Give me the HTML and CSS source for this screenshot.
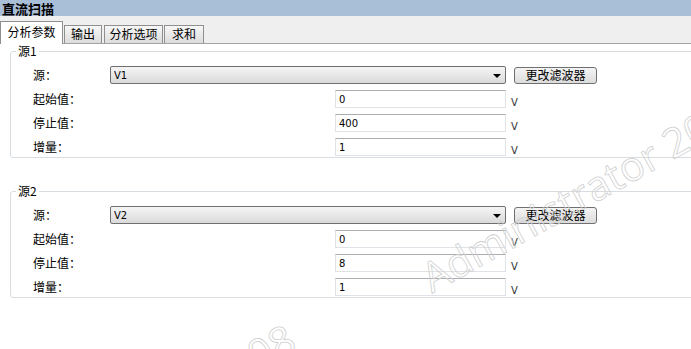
FILE: index.html
```
<html>
	<head>
		<title>直流扫描</title>
		<link rel="stylesheet" href="styles.css">
	</head>
	<body>
		<div class="titlebar">直流扫描</div>
		<div class="tabs">
			<span class="tab selected t1">分析参数</span>
			<span class="tab t2">输出</span>
			<span class="tab t3">分析选项</span>
			<span class="tab t4">求和</span>
		</div>
		<div class="panel">
			<fieldset>
				<legend>源1</legend>
				<div class="rows">
					<div class="row">
						<label>源：</label>
						<div class="combo"><select><option>V1</option></select><span class="arrow"></span></div>
						<button>更改滤波器</button>
					</div>
					<div class="row">
						<label>起始值：</label>
						<input type="text" value="0"/><span class="unit">V</span>
					</div>
					<div class="row">
						<label>停止值：</label>
						<input type="text" value="400"/><span class="unit">V</span>
					</div>
					<div class="row">
						<label>增量：</label>
						<input type="text" value="1"/><span class="unit">V</span>
					</div>
				</div>
			</fieldset>

			<fieldset class="second">
				<legend>源2</legend>
				<div class="rows">
					<div class="row">
						<label>源：</label>
						<div class="combo"><select><option>V2</option></select><span class="arrow"></span></div>
						<button>更改滤波器</button>
					</div>
					<div class="row">
						<label>起始值：</label>
						<input type="text" value="0"/><span class="unit">V</span>
					</div>
					<div class="row">
						<label>停止值：</label>
						<input type="text" value="8"/><span class="unit">V</span>
					</div>
					<div class="row">
						<label>增量：</label>
						<input type="text" value="1"/><span class="unit">V</span>
					</div>
				</div>
			</fieldset>
		</div>
		<span class="watermark wm1">Administrator 2008</span>
		<span class="watermark wm2">Administrator 2008</span>
	</body>
</html>
```

FILE: styles.css
```
body { margin: 0; width: 691px; height: 349px; overflow: hidden;
	position: relative; background: #fff;
	font-family: "Noto Sans CJK SC", sans-serif; font-size: 12px; color: #000;
}

.titlebar { height: 17px; line-height: 17px; padding-left: 2px;
	background: #a9bed7; font-weight: bold; font-size: 13px;
}

.tabs { height: 28px; margin-top: -1px; background: #efefef; border-bottom: 1px solid #a3a3a3;
	display: flex; align-items: flex-end; box-sizing: border-box;
}
.tab { box-sizing: border-box; height: 18px; line-height: 16px; text-align: center;
	border: 1px solid #8f8f8f; border-bottom: none; margin-right: 1px;
	background: linear-gradient(#f7f7f7, #dcdcdc);
}
.tab.selected { height: 23px; line-height: 20px; background: #fff; margin-bottom: -1px; }
.t1 { width: 63px; }
.t2 { width: 38px; margin-right: 2px; }
.t3 { width: 59px; }
.t4 { width: 40px; }

fieldset { margin: 0 0 0 10px; width: 700px; box-sizing: border-box;
	border: 1px solid #d7dde1; border-radius: 3px;
	padding: 8px 0 1px 5px;
}
fieldset.second { margin-top: 26px; }
legend { padding: 0 2px; line-height: 14px; }

.rows { margin-left: 17px; }
.row { display: flex; align-items: center; height: 18px; margin-bottom: 6px; }
.row:last-child { margin-bottom: 0; }
label { width: 77px; line-height: 18px; }

.combo { position: relative; width: 396px; height: 18px; }
select { -webkit-appearance: none; appearance: none; width: 100%; height: 18px;
	border: 1px solid #6f6f6f; border-radius: 2px; padding: 0 0 0 3px;
	background: linear-gradient(#f5f5f5, #dadada);
	font-family: "DejaVu Sans", sans-serif; font-size: 10px; color: #000;
}
.arrow { position: absolute; right: 5px; top: 8px; width: 0; height: 0;
	border-left: 4px solid transparent; border-right: 4px solid transparent;
	border-top: 4px solid #000;
}

button { margin-left: 8px; width: 83px; height: 17px; padding: 0;
	border: 1px solid #707070; border-radius: 3px;
	background: linear-gradient(#f4f4f4, #dcdcdc);
	font-family: "Noto Sans CJK SC", sans-serif; font-size: 12px; line-height: 14px;
}

input { margin-left: 225px; width: 171px; height: 18px; box-sizing: border-box;
	border: 1px solid #dfe3e8; border-top-color: #abadb3; padding: 0 3px;
	font-family: "DejaVu Sans", sans-serif; font-size: 10px;
}
.unit { margin-left: 5px; align-self: flex-end; line-height: 10px;
	font-family: "DejaVu Sans", sans-serif; font-size: 10px; color: #333;
}

.watermark { position: absolute; white-space: nowrap;
	font-family: "Open Sans", sans-serif; font-size: 41px; line-height: 41px;
	color: transparent; -webkit-text-stroke: 0.8px #cfcfcf;
	transform: rotate(-29deg); transform-origin: 0 32px;
}
.wm1 { left: 430px; top: 258px; }
.wm2 { left: -26px; top: 492px; }
```
